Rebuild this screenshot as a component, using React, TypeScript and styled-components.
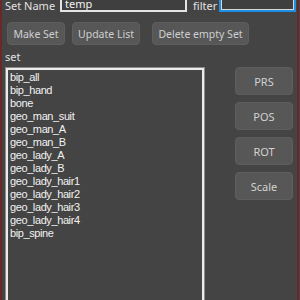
import { createGlobalStyle, styled } from 'styled-components';

const GlobalStyle = createGlobalStyle`
  html, body {
    margin: 0;
    padding: 0;
    background: #444444;
    overflow: hidden;
  }
`;

const setNames = [
  'bip_all',
  'bip_hand',
  'bone',
  'geo_man_suit',
  'geo_man_A',
  'geo_man_B',
  'geo_lady_A',
  'geo_lady_B',
  'geo_lady_hair1',
  'geo_lady_hair2',
  'geo_lady_hair3',
  'geo_lady_hair4',
  'bip_spine',
];

const sideButtons = ['PRS', 'POS', 'ROT', 'Scale'];

const App = (): JSX.Element => {
  return (
    <>
      <GlobalStyle />
      <Frame>
        <NameRow>
          <Label>Set Name</Label>
          <TextField $width={127} defaultValue="temp" />
          <FilterLabel>filter</FilterLabel>
          <TextField $width={77} $focused />
        </NameRow>
        <ButtonRow>
          <ActionButton $width={58}>Make Set</ActionButton>
          <ActionButton $width={68}>Update List</ActionButton>
          <ActionButton $width={97} $gapBefore={12}>
            Delete empty Set
          </ActionButton>
        </ButtonRow>
        <SectionLabel>set</SectionLabel>
        <Body>
          <ListBox>
            {setNames.map((name) => (
              <ListItem key={name}>{name}</ListItem>
            ))}
          </ListBox>
          <SideColumn>
            {sideButtons.map((label) => (
              <SideButton key={label}>{label}</SideButton>
            ))}
          </SideColumn>
        </Body>
      </Frame>
    </>
  );
};

const Frame = styled.div`
  box-sizing: border-box;
  width: 299px;
  height: 300px;
  border-left: 2px solid #6b2828;
  border-right: 2px solid #6b2828;
  overflow: hidden;
  font-family: 'Liberation Sans', Arial, sans-serif;
`;

const NameRow = styled.div`
  display: flex;
  align-items: flex-end;
  height: 18px;
  margin-top: -6px;
  padding-left: 3px;
`;

const Label = styled.span`
  font-family: 'Noto Sans', sans-serif;
  font-size: 11px;
  line-height: 12px;
  color: #e2e2e2;
  white-space: nowrap;
`;

const FilterLabel = styled(Label)`
  margin-left: 6px;
  margin-right: -3px;
`;

const TextField = styled.input<{ $width: number; $focused?: boolean }>`
  box-sizing: border-box;
  width: ${({ $width }) => $width}px;
  height: 18px;
  margin-left: 5px;
  padding: 0 3px;
  background: #3f3f3f;
  color: #f2f2f2;
  font-family: 'Noto Sans', sans-serif;
  font-size: 11px;
  outline: none;
  border: ${({ $focused }) =>
    $focused ? '2px solid #1d8fe6' : '2px solid #e4e4e4'};
  box-shadow: ${({ $focused }) =>
    $focused ? 'inset 0 0 0 1px #d8d8d8' : 'none'};
`;

const ButtonRow = styled.div`
  display: flex;
  margin-top: 10px;
  padding-left: 5px;
  gap: 7px;
`;

const ActionButton = styled.button<{ $width: number; $gapBefore?: number }>`
  box-sizing: border-box;
  width: ${({ $width }) => $width}px;
  height: 23px;
  margin-left: ${({ $gapBefore }) => ($gapBefore ? $gapBefore - 7 : 0)}px;
  padding: 0;
  border: 1px solid #5e5e5e;
  border-radius: 4px;
  background: #575757;
  color: #cfcfcf;
  font-family: 'Noto Sans', sans-serif;
  font-size: 10.5px;
  white-space: nowrap;
`;

const SectionLabel = styled(Label)`
  display: block;
  margin-top: 5px;
  padding-left: 3px;
  line-height: 13px;
`;

const Body = styled.div`
  display: flex;
  align-items: flex-start;
  margin-top: 5px;
  padding-left: 4px;
`;

const ListBox = styled.ul`
  box-sizing: border-box;
  width: 198px;
  height: 260px;
  margin: 0;
  padding: 1px 0 0 2px;
  list-style: none;
  border: 2px solid #ececec;
  outline: 1px solid #8c8c8c;
  background: #444444;
`;

const ListItem = styled.li`
  font-size: 11px;
  line-height: 13px;
  letter-spacing: -0.4px;
  color: #f2f2f2;
  white-space: nowrap;
`;

const SideColumn = styled.div`
  display: flex;
  flex-direction: column;
  gap: 7px;
  margin-left: 31px;
  margin-top: -1px;
`;

const SideButton = styled.button`
  box-sizing: border-box;
  width: 58px;
  height: 28px;
  padding: 0;
  border: 1px solid #5e5e5e;
  border-radius: 4px;
  background: #575757;
  color: #d2d2d2;
  font-family: 'Noto Sans', sans-serif;
  font-size: 11px;
`;

export default App;
